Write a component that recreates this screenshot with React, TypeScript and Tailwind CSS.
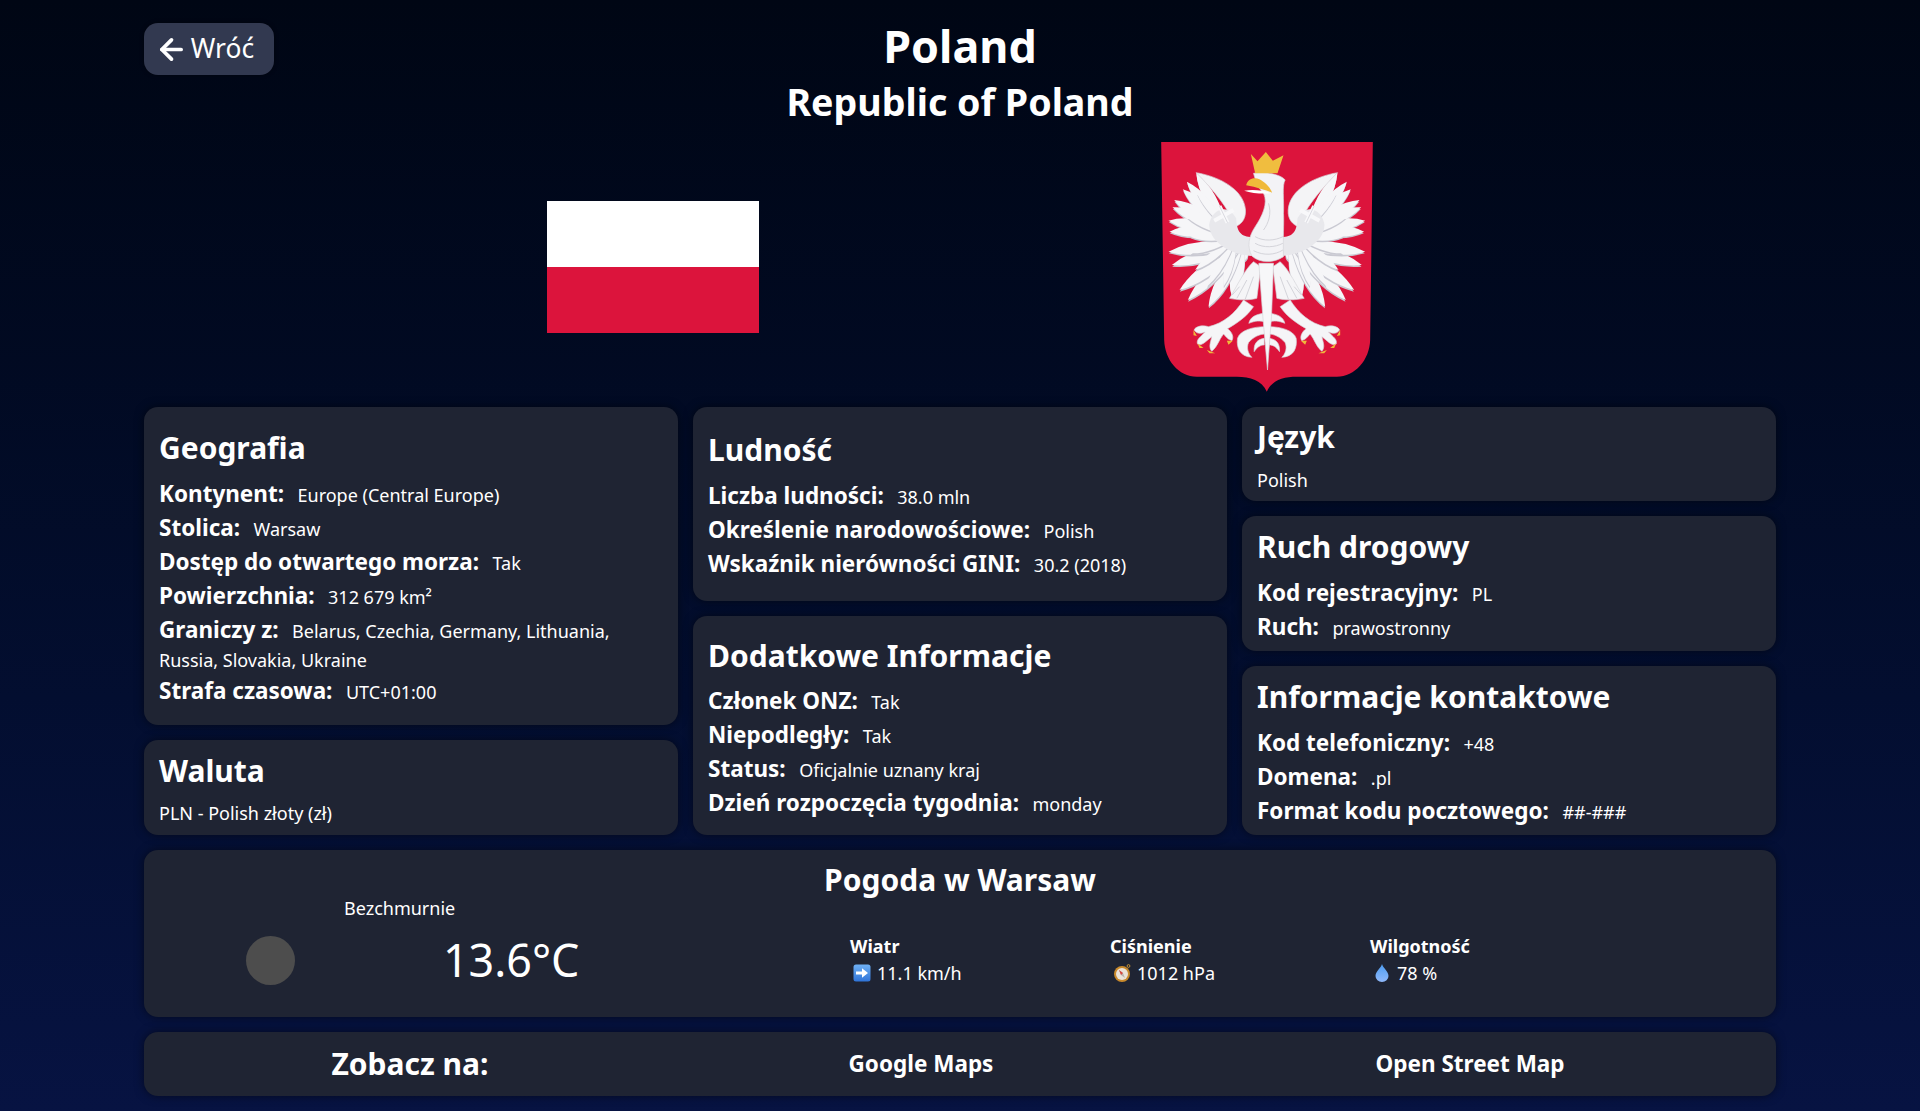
import { ArrowLeft } from "lucide-react"
import type { ReactNode } from "react"

const cardClass = "rounded-[14px] bg-[#1f2433] shadow-[0_0_10px_rgba(0,0,0,0.5)]"

function Row({ label, children }: { label: string; children: ReactNode }) {
  return (
    <p className="text-[18px] leading-[27px]">
      <b className="mr-[13.5px] text-[22.5px] font-bold leading-[34px]">{label}</b>
      {children}
    </p>
  )
}

function Feather({ tip, base, w }: { tip: number[]; base: number[]; w: number }) {
  const dx = tip[0] - base[0]
  const dy = tip[1] - base[1]
  const len = Math.hypot(dx, dy)
  const nx = (-dy / len) * w
  const ny = (dx / len) * w
  const mx = base[0] + dx * 0.6
  const my = base[1] + dy * 0.6
  const d = `M${base[0]} ${base[1]}Q${mx + nx} ${my + ny} ${tip[0]} ${tip[1]}Q${mx - nx} ${my - ny} ${base[0]} ${base[1]}Z`
  return (
    <g>
      <path d={d} fill="#c9c9d2" transform="translate(1 5)" />
      <path d={d} fill="#f6f6f8" />
    </g>
  )
}

const upper = [
  [168, 128],
  [140, 155],
  [128, 178],
  [102, 210],
  [97, 232],
  [85, 272],
  [88, 305],
]
const lower = [
  [300, 400],
  [275, 498],
  [205, 530],
  [143, 510],
  [118, 480],
  [95, 405],
  [85, 365],
]
const inner = [
  [250, 470],
  [200, 470],
  [165, 420],
  [150, 370],
  [150, 320],
  [140, 262],
  [170, 190],
]

// one half of the eagle, the other half is the same thing mirrored
function EagleSide() {
  return (
    <g>
      {upper.map((t, i) => (
        <Feather key={i} tip={t} base={[262, 300]} w={34} />
      ))}
      {lower.map((t, i) => (
        <Feather key={i} tip={t} base={[310, 340]} w={38} />
      ))}
      {inner.map((t, i) => (
        <Feather key={i} tip={t} base={[290, 320]} w={24} />
      ))}
      <path d="M168 128C240 140 312 180 316 240C318 270 300 285 285 290C270 240 220 180 168 128Z" fill="#f4f4f6" stroke="#d4d4da" strokeWidth="2" />
      <path d="M207 285C212 240 262 215 288 265C290 310 305 320 335 322L335 378C285 375 210 345 207 285Z" fill="#e8e8ec" />
      <path d="M238 228L262 278M280 240L222 272" stroke="#f8f8fa" strokeWidth="12" />
      <path d="M238 228L262 278" stroke="#c9c9d2" strokeWidth="2" fill="none" />
      <path d="M340 395C312 420 290 470 268 505C290 510 325 512 350 505L362 410Z" fill="#f5f5f7" stroke="#d4d4da" strokeWidth="2" />
      <path d="M276 495L298 470M290 505L320 450M315 508L340 440" stroke="#d4d4da" strokeWidth="3" fill="none" />
      <path d="M310 510C285 550 250 580 205 590C185 584 165 590 162 600C170 612 180 612 195 606C180 622 168 628 172 642C186 650 200 630 215 620C210 640 205 652 215 664C232 650 236 630 250 612C258 620 262 628 275 632C282 622 276 606 262 596C290 580 320 560 340 530Z" fill="#f5f5f7" stroke="#d4d4da" strokeWidth="2" />
      <path d="M160 600L170 618L160 616ZM172 640L190 654L178 654ZM200 660L225 670L208 670ZM260 632L278 632L265 644Z" fill="#f0b93a" />
      <path d="M375 590C340 590 300 600 292 625C288 655 300 680 335 682C325 672 318 655 325 638C340 620 360 612 375 612Z" fill="#f5f5f7" stroke="#d4d4da" strokeWidth="2" />
      <path d="M372 550C350 552 330 560 326 580C345 572 360 572 372 575Z" fill="#f5f5f7" stroke="#d4d4da" strokeWidth="2" />
      <path d="M372 625C352 628 340 640 342 665C352 650 362 645 372 645Z" fill="#f5f5f7" stroke="#d4d4da" strokeWidth="2" />
    </g>
  )
}

function Coat() {
  return (
    <svg viewBox="63 36 635 750" className="h-[250px] w-[212px] shrink-0">
      <path d="M63 36H698L690 630C688 690 645 740 590 740H470C430 740 395 750 380 785C365 750 330 740 290 740H170C115 740 74 690 72 630Z" fill="#dc143c" />
      <EagleSide />
      <g transform="matrix(-1 0 0 1 760 0)">
        <EagleSide />
      </g>
      <path d="M340 130C375 122 425 135 435 150C425 165 432 210 430 250C432 280 428 320 430 380C400 400 360 400 335 378C320 350 325 320 345 290C365 260 385 220 370 190C355 175 345 150 340 130Z" fill="#f3f3f6" stroke="#d4d4da" strokeWidth="2" />
      <path d="M345 320C370 335 405 332 428 320M345 340C370 355 405 352 428 340M340 362C370 378 405 375 428 360M385 220C395 250 385 280 370 300" stroke="#d4d4da" strokeWidth="3" fill="none" />
      <path d="M356 400H400L394 560L382 720L368 560Z" fill="#f7f7f9" stroke="#d4d4da" strokeWidth="2" />
      <path d="M312 182C335 178 370 180 392 190C365 192 335 190 312 182Z" fill="#ffffff" />
      <path d="M318 166C322 148 340 140 358 148C372 156 388 168 396 188C375 180 350 172 318 166Z" fill="#f0b93a" />
      <path d="M332 72L352 94L377 66L398 92L430 76L412 130H345Z" fill="#f0bd3f" />
    </svg>
  )
}

function ArrowEmoji() {
  return (
    <svg viewBox="0 0 18 18" className="h-[18px] w-[18px] shrink-0">
      <defs>
        <linearGradient id="arrowBox" x1="0" y1="0" x2="0" y2="1">
          <stop offset="0" stopColor="#6fb1f5" />
          <stop offset="1" stopColor="#2f74d8" />
        </linearGradient>
      </defs>
      <rect x="0.5" y="0.5" width="17" height="17" rx="2.5" fill="url(#arrowBox)" />
      <path d="M3 7.4H9V4.2L15 9L9 13.8V10.6H3Z" fill="#ffffff" />
    </svg>
  )
}

function CompassEmoji() {
  return (
    <svg viewBox="0 0 18 18" className="h-[18px] w-[18px] shrink-0">
      <circle cx="15.5" cy="2" r="1.4" fill="none" stroke="#d39a35" strokeWidth="0.9" />
      <circle cx="9" cy="10" r="8" fill="#c98a2c" />
      <circle cx="9" cy="10" r="6" fill="#ece3d8" />
      <path d="M6 6L10 9L12 14L8 11Z" fill="#b9b3ad" />
      <path d="M6 6L10 9L8 11Z" fill="#d9463e" />
    </svg>
  )
}

function DropEmoji() {
  return (
    <svg viewBox="0 0 18 18" className="h-[18px] w-[18px] shrink-0">
      <defs>
        <linearGradient id="dropFill" x1="0" y1="0" x2="0" y2="1">
          <stop offset="0" stopColor="#4d9cf0" />
          <stop offset="1" stopColor="#8fb8fa" />
        </linearGradient>
      </defs>
      <path d="M9 0C10 4 15.500 7.500 15.500 12A6.500 6 0 0 1 2.500 12C2.500 7.500 8 4 9 0Z" fill="url(#dropFill)" />
    </svg>
  )
}

function Stat({ title, icon, value }: { title: string; icon: ReactNode; value: string }) {
  return (
    <div className="w-[260px] shrink-0">
      <p className="text-[18px] font-bold leading-[28px]">{title}</p>
      <p className="flex items-center gap-[6px] pl-[3px] text-[18px] leading-[26px]">
        {icon}
        {value}
      </p>
    </div>
  )
}

export default function App() {
  return (
    <div className="min-h-[1111px] bg-gradient-to-b from-[#000614] to-[#071342] font-['Noto_Sans',sans-serif] text-white">
      <div className="mx-auto w-[1632px] pb-4">
        <header className="grid grid-cols-[1fr_auto_1fr] pt-[20px]">
          <div>
            <button className="mt-[3px] flex h-[52px] w-[130px] items-center justify-center gap-[3px] rounded-[14px] bg-[#323950] pr-[9px] text-[26.4px] shadow-[0_0_4px_rgba(0,0,0,0.4)]">
              <ArrowLeft size={33} strokeWidth={2.7} />
              Wróć
            </button>
          </div>
          <div className="text-center">
            <h1 className="text-[44.8px] font-bold leading-[52px]">Poland</h1>
            <h2 className="mt-[6px] text-[37.6px] font-bold leading-[48px]">Republic of Poland</h2>
          </div>
        </header>

        <section className="mt-[16px] flex h-[250px] items-center justify-evenly">
          <div className="w-[212px] shrink-0">
            <div className="h-[66px] bg-white" />
            <div className="h-[66px] bg-[#dc143c]" />
          </div>
          <Coat />
        </section>

        <section className="mt-[15px] grid h-[428px] grid-cols-3 gap-[15px]">
          <div className="flex flex-col gap-[15px]">
            <div className={`${cardClass} h-[318px] px-[15px] pt-[19px]`}>
              <h3 className="mb-[7px] text-[30px] font-bold leading-[44px]">Geografia</h3>
              <Row label="Kontynent:">Europe (Central Europe)</Row>
              <Row label="Stolica:">Warsaw</Row>
              <Row label="Dostęp do otwartego morza:">Tak</Row>
              <Row label="Powierzchnia:">312 679 km²</Row>
              <Row label="Graniczy z:">Belarus, Czechia, Germany, Lithuania, Russia, Slovakia, Ukraine</Row>
              <Row label="Strafa czasowa:">UTC+01:00</Row>
            </div>
            <div className={`${cardClass} flex-1 px-[15px] pt-[9px]`}>
              <h3 className="mb-[6px] text-[30px] font-bold leading-[44px]">Waluta</h3>
              <p className="text-[18px] leading-[29px]">PLN - Polish złoty (zł)</p>
            </div>
          </div>

          <div className="flex flex-col gap-[15px]">
            <div className={`${cardClass} h-[194px] px-[15px] pt-[21px]`}>
              <h3 className="mb-[7px] text-[30px] font-bold leading-[44px]">Ludność</h3>
              <Row label="Liczba ludności:">38.0 mln</Row>
              <Row label="Określenie narodowościowe:">Polish</Row>
              <Row label="Wskaźnik nierówności GINI:">30.2 (2018)</Row>
            </div>
            <div className={`${cardClass} flex-1 px-[15px] pt-[18px]`}>
              <h3 className="mb-[6px] text-[30px] font-bold leading-[44px]">Dodatkowe Informacje</h3>
              <Row label="Członek ONZ:">Tak</Row>
              <Row label="Niepodległy:">Tak</Row>
              <Row label="Status:">Oficjalnie uznany kraj</Row>
              <Row label="Dzień rozpoczęcia tygodnia:">monday</Row>
            </div>
          </div>

          <div className="flex flex-col gap-[15px]">
            <div className={`${cardClass} h-[94px] px-[15px] pt-[8px]`}>
              <h3 className="mb-[7px] text-[30px] font-bold leading-[44px]">Język</h3>
              <p className="text-[18px] leading-[29px]">Polish</p>
            </div>
            <div className={`${cardClass} h-[135px] px-[15px] pt-[9px]`}>
              <h3 className="mb-[7px] text-[30px] font-bold leading-[44px]">Ruch drogowy</h3>
              <Row label="Kod rejestracyjny:">PL</Row>
              <Row label="Ruch:">prawostronny</Row>
            </div>
            <div className={`${cardClass} flex-1 px-[15px] pt-[9px]`}>
              <h3 className="mb-[7px] text-[30px] font-bold leading-[44px]">Informacje kontaktowe</h3>
              <Row label="Kod telefoniczny:">+48</Row>
              <Row label="Domena:">.pl</Row>
              <Row label="Format kodu pocztowego:">##-###</Row>
            </div>
          </div>
        </section>

        <section className={`${cardClass} mt-[15px] h-[167px]`}>
          <h3 className="pt-[11px] text-center text-[30px] font-bold leading-[38px]">Pogoda w Warsaw</h3>
          <div className="flex">
            <div className="ml-[102px] mt-[37px] h-[49px] w-[49px] shrink-0 rounded-full bg-[#4d4d4d]" />
            <div className="ml-[49px] w-[506px] shrink-0">
              <p className="-mt-[6px] text-[18px] leading-[30px]">Bezchmurnie</p>
              <p className="ml-[99px] mt-[8px] text-[44.8px] leading-[58px]">13.6°C</p>
            </div>
            <div className="mt-[33px] flex">
              <Stat title="Wiatr" icon={<ArrowEmoji />} value="11.1 km/h" />
              <Stat title="Ciśnienie" icon={<CompassEmoji />} value="1012 hPa" />
              <Stat title="Wilgotność" icon={<DropEmoji />} value="78 %" />
            </div>
          </div>
        </section>

        <section className={`${cardClass} mt-[15px] grid h-[64px] grid-cols-[534px_486px_1fr] items-center text-center font-bold`}>
          <span className="mb-[2px] pr-[2px] text-[30px]">Zobacz na:</span>
          <a className="text-[22.5px]">Google Maps</a>
          <a className="text-[22.5px]">Open Street Map</a>
        </section>
      </div>
    </div>
  )
}
